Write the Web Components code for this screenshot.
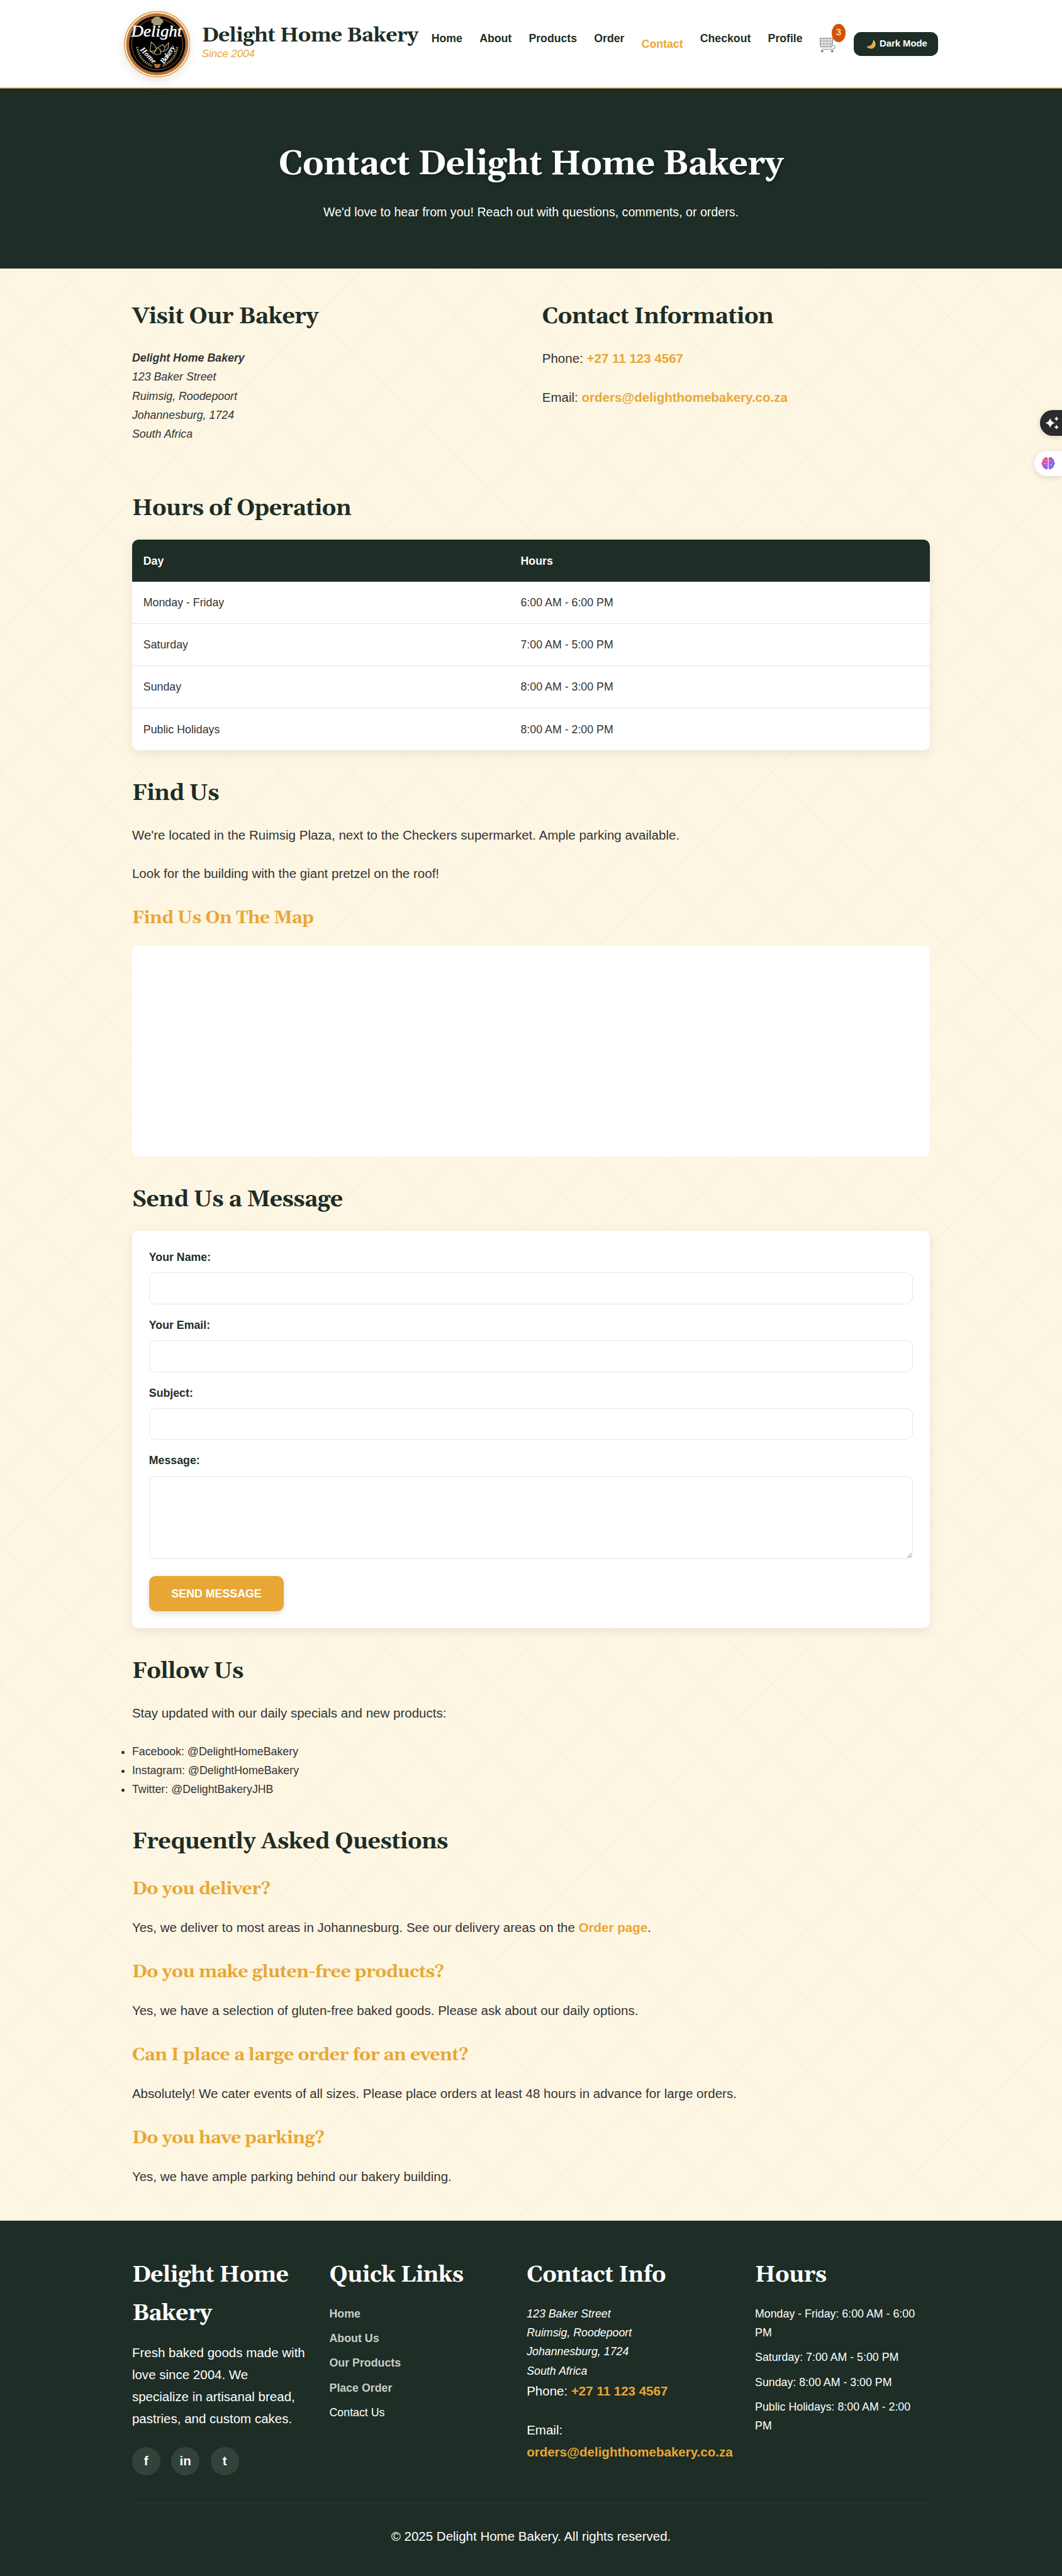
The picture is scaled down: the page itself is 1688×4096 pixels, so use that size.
<!DOCTYPE html>
<html lang="en">
<head>
<meta charset="utf-8">
<title>Contact - Delight Home Bakery</title>
<style>
html{background:#1e2d26}
body{margin:0;zoom:.96182;width:1755px;font-family:"Liberation Sans",Arial,sans-serif;font-size:18.56px;line-height:31.55px;color:#333;
--green:#1e2d26;--gold:#e8a735;--serif:Gelasio,Georgia,"Liberation Serif",serif}
</style>
</head>
<body>
<bakery-page></bakery-page>
<script>
const define=(name,html)=>customElements.define(name,class extends HTMLElement{
  connectedCallback(){
    if(this.shadowRoot)return;
    const t=document.createElement('template');
    t.innerHTML=html;
    this.attachShadow({mode:'open'}).appendChild(t.content.cloneNode(true));
  }
});

define('bakery-logo',`<style>:host{display:block;width:110px;height:111px;border-radius:50%;box-shadow:0 5px 15px rgba(0,0,0,.1)}svg{display:block}</style>
<svg width="110" height="111" viewBox="0 0 110 111">
<circle cx="55" cy="55.5" r="54" fill="#fff6dc" stroke="#e8ab4c" stroke-width="2"/>
<circle cx="55" cy="55.5" r="51.3" fill="#b3703f"/>
<circle cx="55" cy="55.5" r="46.5" fill="#000"/>
<circle cx="55" cy="55.5" r="42.3" fill="none" stroke="#a0683c" stroke-width="1"/>
<path d="M48 21c-4 0-4-6 0-7 2-4 5-4 7-4s5 0 7 4c4 1 4 7 0 7l-1 3H49z" fill="#a39b78"/>
<g fill="none" stroke="#b8ad7c" stroke-width="1.2"><path d="M45 52l5 4 4 8-5 7-6-4zM42 67l9 0 4-6 5 3 1 7-8 2-4-4M56 61l8-5 4 5-3 7-6-2M68 60l6-7-1 9-6 5"/></g>
<g fill="none" stroke="#857e5e" stroke-width="4" stroke-dasharray="2.2 1.3"><path d="M22 60q2 21 25 32"/><path d="M88 60q-2 21-25 32"/></g>
<path d="M49 88h12l-3 7h-6z" fill="#b3703f"/>
<g fill="#fff" font-family="Liberation Serif,serif" font-style="italic">
<text x="54" y="43" font-size="26" text-anchor="middle" textLength="84" lengthAdjust="spacingAndGlyphs" stroke="#fff" stroke-width=".5">Delight</text>
<text transform="translate(26 65) rotate(46)" font-size="13" font-weight="bold">Home</text>
<text transform="translate(66 89) rotate(-56)" font-size="13" font-weight="bold" textLength="34">Bakery</text></g>
</svg>`);

define('nav-link',`<style>:host{display:block;font-weight:700;font-size:18.4px;color:var(--green);white-space:nowrap}:host([active]){padding-top:9.3px;color:var(--gold)}</style><slot></slot>`);

define('cart-button',`<style>:host{display:block;position:relative;width:28px;height:25px}
b{position:absolute;left:20.5px;top:-22px;width:22.5px;height:30px;border-radius:50%;background:#d35400;color:#fff;font:400 15.5px/29px "Liberation Sans",sans-serif;text-align:center}svg{display:block}</style>
<svg width="28" height="25" viewBox="0 0 28 25"><path d="M2 1h21l-2 14H4q-1.5-.2-2-2z" fill="#ececee" stroke="#98949c" stroke-width="1.6"/><path d="M8 1v14M13 1v14M18 1v14M2 5.6h20M3 10.300h18" stroke="#aaa7ad" stroke-width="1.1"/><path d="M23 13q4-1 3 3.5-1 2.500-4 2.500H4" fill="none" stroke="#b8b2c0" stroke-width="1.8"/><circle cx="5" cy="22.3" r="2" fill="#5f86cf"/><circle cx="21.5" cy="22.3" r="2" fill="#5f86cf"/></svg><b>3</b>`);

define('mode-button',`<style>:host{display:flex;align-items:center;box-sizing:border-box;width:139.5px;height:39.5px;padding-left:21px;gap:6px;border-radius:12px;background:var(--green);color:#fff;font:700 15.45px/20px "Liberation Sans",sans-serif;white-space:nowrap}svg{display:block;margin-top:1px}</style>
<svg width="16" height="16" viewBox="0 0 16 16"><defs><linearGradient id="m" x2="0" y2="1"><stop stop-color="#f6d06c"/><stop offset="1" stop-color="#e3964e"/></linearGradient></defs><path d="M11.5.5c5 4 4.500 10 1 13-4 3-10 2-12.300-2.500 5 1 11-2.500 11.300-10.500z" fill="url(#m)"/></svg><slot></slot>`);

define('site-header',`<style>:host{display:block;background:#fff}
.in{display:flex;align-items:flex-start;height:144px;padding-left:204.5px}
bakery-logo{margin-top:17.5px}
.brand{margin:32.3px 0 0 19px;width:379.5px;white-space:nowrap}
.name{font:700 33.5px/54px var(--serif);letter-spacing:-.65px;color:var(--green)}
.tag{font-style:italic;font-size:17.5px;line-height:20px;color:var(--gold);margin-top:-7.2px}
nav{display:flex;gap:28.3px;margin-top:47.8px;width:641px}
cart-button{margin:62px 28.5px 0 0}
mode-button{margin-top:53px}
.line{height:3px;background:linear-gradient(#fbdc8e,#c49a4a 60%,#7c6a3c)}</style>
<div class="in"><bakery-logo></bakery-logo><div class="brand"><div class="name">Delight Home Bakery</div><div class="tag">Since 2004</div></div>
<nav><nav-link>Home</nav-link><nav-link>About</nav-link><nav-link>Products</nav-link><nav-link>Order</nav-link><nav-link active>Contact</nav-link><nav-link>Checkout</nav-link><nav-link>Profile</nav-link></nav>
<cart-button></cart-button><mode-button>Dark Mode</mode-button></div><div class="line"></div>`);

define('page-hero',`<style>:host{display:block;height:296.5px;box-sizing:border-box;padding-top:77.3px;background:var(--green);color:#fff;text-align:center}
h1{margin:0;font:700 55.7px/94.6px var(--serif);letter-spacing:-.58px;text-shadow:2px 2px 5px rgba(0,0,0,.3)}
p{margin:13.5px 0 0;font-size:20.43px;line-height:36px}</style>
<h1><slot name="title"></slot></h1><p><slot></slot></p>`);

define('section-title',`<style>:host{display:block;font:700 37.1px/63.1px var(--serif);letter-spacing:-.57px;color:var(--green)}div{transform:translateY(2.9px)}</style><div><slot></slot></div>`);
define('sub-title',`<style>:host{display:block;font:700 29.7px/50.5px var(--serif);letter-spacing:-.58px;color:var(--gold)}div{transform:translateY(2.2px)}</style><div><slot></slot></div>`);
define('body-text',`<style>:host{display:block;font-size:21.34px;line-height:36.3px}::slotted(b){color:var(--gold)}</style><slot></slot>`);

define('hours-table',`<style>:host{display:block;height:347.5px;border-radius:11px;overflow:hidden;background:#fff;box-shadow:0 5px 17px rgba(0,0,0,.08)}
div{display:grid;grid-template-columns:623.5px 1fr;height:69.6px;align-items:center;box-sizing:border-box;border-bottom:1px solid #e4e4e4}
div:last-child{border:0}span{padding:1.6px 0 0 18.6px;font-size:18.5px}
.h{background:var(--green);color:#fff;font-weight:700;height:69px;border:0}</style>
<div class="h"><span>Day</span><span>Hours</span></div><div><span>Monday - Friday</span><span>6:00 AM - 6:00 PM</span></div><div><span>Saturday</span><span>7:00 AM - 5:00 PM</span></div><div><span>Sunday</span><span>8:00 AM - 3:00 PM</span></div><div><span>Public Holidays</span><span>8:00 AM - 2:00 PM</span></div>`);

define('form-field',`<style>:host{display:block;font-weight:700;font-size:18.45px;color:var(--green);margin-bottom:18.6px}
::slotted(input),::slotted(textarea){display:block;box-sizing:border-box;width:100%;height:52.6px;margin:9.3px 0 0;border:1px solid #e6e6e6;border-radius:11px;background:#fff;outline:0;padding:8px}
::slotted(textarea){height:137.5px}</style><div><slot name="label"></slot></div><slot></slot>`);

define('message-form',`<style>:host{display:block;box-sizing:border-box;height:657.8px;padding:28.4px 28px 0;border-radius:11px;background:#fff;box-shadow:0 5px 17px rgba(0,0,0,.08)}
button{display:block;margin-top:28px;width:223px;height:58.6px;border:0;border-radius:11px;background:var(--gold);color:#fff;font:700 18.5px "Liberation Sans",sans-serif;box-shadow:0 4px 10px rgba(0,0,0,.12);padding:2px 0 0}</style>
<form-field><span slot="label">Your Name:</span><input></form-field><form-field><span slot="label">Your Email:</span><input></form-field><form-field><span slot="label">Subject:</span><input></form-field><form-field><span slot="label">Message:</span><textarea></textarea></form-field><button>SEND MESSAGE</button>`);

define('contact-main',`<style>:host{display:block;box-sizing:border-box;height:3228px;padding:46.7px 218.25px 0;background:linear-gradient(45deg,transparent 49.5%,#f8efda 49.7%,#f8efda 50.3%,transparent 50.5%) 0 -443.5px/116px 116px,linear-gradient(-45deg,transparent 49.5%,#f8efda 49.7%,#f8efda 50.3%,transparent 50.5%) 0 -443.5px/116px 116px,#fdf6e3}
.two{display:grid;grid-template-columns:1fr 1fr;column-gap:37px;margin-bottom:73.3px;height:243.7px}
address{margin-top:22.8px;font-size:18.5px}
.g{margin-top:28px}.t{margin-top:22.1px}.s{margin-top:37.5px}
hours-table,message-form{margin-top:22.2px}
.map{height:348px;margin-top:22px;border-radius:11px;background:#fff}
ul{margin:28.4px 0 36.4px;padding:0;font-size:18.5px}
sub-title{margin-top:27.9px}sub-title.f{margin-top:22px}sub-title+body-text{margin-top:22.6px}</style>
<div class="two"><div><section-title>Visit Our Bakery</section-title><address><b>Delight Home Bakery</b><br>123 Baker Street<br>Ruimsig, Roodepoort<br>Johannesburg, 1724<br>South Africa</address></div>
<div><section-title>Contact Information</section-title><body-text class="t">Phone: <b>+27 11 123 4567</b></body-text><body-text class="g">Email: <b>orders@delighthomebakery.co.za</b></body-text></div></div>
<section-title>Hours of Operation</section-title><hours-table></hours-table>
<section-title class="s">Find Us</section-title><body-text class="t">We're located in the Ruimsig Plaza, next to the Checkers supermarket. Ample parking available.</body-text><body-text class="g">Look for the building with the giant pretzel on the roof!</body-text>
<sub-title>Find Us On The Map</sub-title><div class="map"></div>
<section-title class="s">Send Us a Message</section-title><message-form></message-form>
<section-title class="s">Follow Us</section-title><body-text class="t">Stay updated with our daily specials and new products:</body-text>
<ul><li>Facebook: @DelightHomeBakery</li><li>Instagram: @DelightHomeBakery</li><li>Twitter: @DelightBakeryJHB</li></ul>
<section-title>Frequently Asked Questions</section-title>
<sub-title class="f">Do you deliver?</sub-title><body-text>Yes, we deliver to most areas in Johannesburg. See our delivery areas on the <b>Order page</b>.</body-text>
<sub-title>Do you make gluten-free products?</sub-title><body-text>Yes, we have a selection of gluten-free baked goods. Please ask about our daily options.</body-text>
<sub-title>Can I place a large order for an event?</sub-title><body-text>Absolutely! We cater events of all sizes. Please place orders at least 48 hours in advance for large orders.</body-text>
<sub-title>Do you have parking?</sub-title><body-text>Yes, we have ample parking behind our bakery building.</body-text>`);

define('site-footer',`<style>:host{display:block;box-sizing:border-box;height:587px;padding:56px 218.25px 0;background:var(--green);color:#fff}
.g{display:grid;grid-template-columns:1fr 1fr 340.3px 1fr;column-gap:37px;height:409.9px;border-bottom:1px solid #2d3b35;white-space:nowrap;font-size:18.5px}
section-title{color:#fff;margin-bottom:18.6px}
.l{display:grid;align-content:start;row-gap:9.28px}.l b{color:#c9cdca}
.soc{display:flex;gap:18.6px;margin-top:28.2px}.soc b{width:46.4px;height:46.4px;border-radius:50%;background:#34423c;text-align:center;font-size:21.3px;line-height:45px}
body-text+body-text{margin-top:28px}.c{text-align:center;margin-top:37.3px}</style>
<div class="g"><div><section-title>Delight Home<br>Bakery</section-title><body-text>Fresh baked goods made with<br>love since 2004. We<br>specialize in artisanal bread,<br>pastries, and custom cakes.</body-text><div class="soc"><b>f</b><b>in</b><b>t</b></div></div>
<div><section-title>Quick Links</section-title><div class="l"><b>Home</b><b>About Us</b><b>Our Products</b><b>Place Order</b><span>Contact Us</span></div></div>
<div><section-title>Contact Info</section-title><address>123 Baker Street<br>Ruimsig, Roodepoort<br>Johannesburg, 1724<br>South Africa</address><body-text>Phone: <b>+27 11 123 4567</b></body-text><body-text>Email:<br><b>orders@delighthomebakery.co.za</b></body-text></div>
<div><section-title>Hours</section-title><div class="l"><span>Monday - Friday: 6:00 AM - 6:00<br>PM</span><span>Saturday: 7:00 AM - 5:00 PM</span><span>Sunday: 8:00 AM - 3:00 PM</span><span>Public Holidays: 8:00 AM - 2:00<br>PM</span></div></div></div>
<body-text class="c">© 2025 Delight Home Bakery. All rights reserved.</body-text>`);

define('side-tools',`<style>:host{position:absolute;right:0;top:678px;width:46px;display:flex;flex-direction:column;align-items:flex-end;gap:25px}
div{display:flex;align-items:center;box-sizing:border-box;height:42px;border-radius:21px 0 0 21px;box-shadow:0 2px 10px rgba(0,0,0,.14)}
.a{width:36.7px;background:#2b2b2b;padding-left:9px}.b{width:46px;background:#fff;padding-left:12px}</style>
<div class="a"><svg width="24" height="24" viewBox="0 0 24 24" fill="#fff"><path d="M8.5 4q1.5 6.500 8 8-6.500 1.500-8 8-1.500-6.500-8-8 6.500-1.500 8-8zM19 1q.7 3.300 4 4-3.300.7-4 4-.7-3.300-4-4 3.300-.7 4-4zM19 15q.7 3.300 4 4-3.300.7-4 4-.7-3.300-4-4 3.300-.7 4-4z"/></svg></div>
<div class="b"><svg width="23" height="22" viewBox="0 0 23 22"><defs><linearGradient id="g" x2="1" y2="1"><stop stop-color="#f79a3c"/><stop offset=".3" stop-color="#e5479f"/><stop offset=".6" stop-color="#8a5cf0"/><stop offset="1" stop-color="#3f7df5"/></linearGradient></defs><path d="M10.8 2.500C9 0 5 .5 4.500 3.500 2 4 1.500 6.500 2.300 8 0 9.500 0 13 2.300 14.500 2 17.500 4 19 5.500 19c1.500 3 4.500 2.500 5.300.5zM12.200 2.500C14 0 18 .5 18.500 3.500 21 4 21.500 6.500 20.700 8c2.300 1.500 2.300 5 0 6.500.3 3-1.700 4.500-3.200 4.500-1.500 3-4.500 2.500-5.300.5z" fill="url(#g)"/><path d="M4 11.500h4.500M8.500 6.500l-2.500 1M7 15.500l1.500-1.500M14.500 7l2.500 1.500M14.500 13h3l1.500-2M15 16.500l2-1" stroke="#fff" stroke-opacity=".75" fill="none"/></svg></div>`);

define('bakery-page',`<style>:host{display:block;position:relative}</style>
<site-header></site-header><page-hero><span slot="title">Contact Delight Home Bakery</span>We'd love to hear from you! Reach out with questions, comments, or orders.</page-hero><contact-main></contact-main><site-footer></site-footer><side-tools></side-tools>`);
</script>
</body>
</html>
